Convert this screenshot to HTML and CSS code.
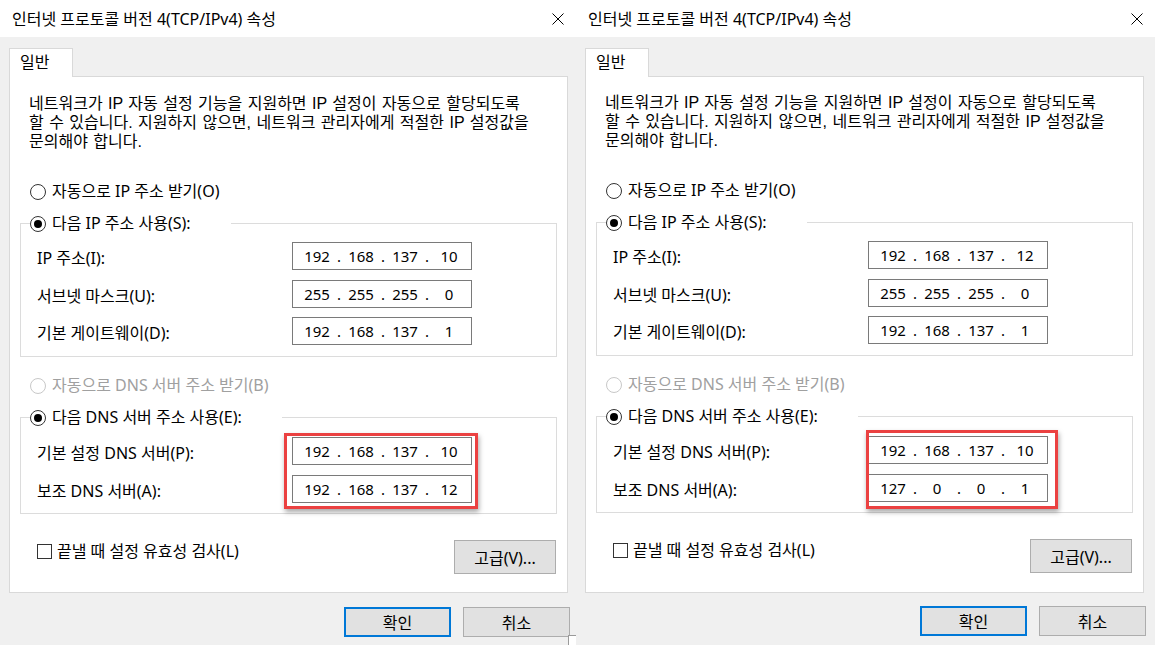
FILE: index.html
```html
<!DOCTYPE html>
<html lang="ko">
<head>
<meta charset="utf-8">
<title>인터넷 프로토콜 버전 4(TCP/IPv4) 속성</title>
<link rel="stylesheet" href="styles.css">
</head>
<body>
<div class="dlg">
  <div class="titlebar">
    <span class="title">인터넷 프로토콜 버전 4(TCP/IPv4) 속성</span>
    <svg class="close" viewBox="0 0 12 12" width="12" height="12"><path d="M0.5 0.5L11.5 11.5M11.5 0.5L0.5 11.5" stroke="#000" stroke-width="1" fill="none"/></svg>
  </div>
  <div class="tabs"><div class="tab">일반</div></div>
  <div class="panel">
    <p class="desc">네트워크가 IP 자동 설정 기능을 지원하면 IP 설정이 자동으로 할당되도록<br>할 수 있습니다. 지원하지 않으면, 네트워크 관리자에게 적절한 IP 설정값을<br>문의해야 합니다.</p>
    <div class="opt first"><span class="radio"></span><span>자동으로 IP 주소 받기(O)</span></div>
    <fieldset class="group g1">
      <legend class="opt"><span class="radio on"></span><span>다음 IP 주소 사용(S):</span></legend>
      <div class="field"><span class="lbl">IP 주소(I):</span><div class="ip"><span class="oct">192</span><span class="dot">.</span><span class="oct">168</span><span class="dot">.</span><span class="oct">137</span><span class="dot">.</span><span class="oct">10</span></div></div>
      <div class="field"><span class="lbl">서브넷 마스크(U):</span><div class="ip"><span class="oct">255</span><span class="dot">.</span><span class="oct">255</span><span class="dot">.</span><span class="oct">255</span><span class="dot">.</span><span class="oct">0</span></div></div>
      <div class="field"><span class="lbl">기본 게이트웨이(D):</span><div class="ip"><span class="oct">192</span><span class="dot">.</span><span class="oct">168</span><span class="dot">.</span><span class="oct">137</span><span class="dot">.</span><span class="oct">1</span></div></div>
    </fieldset>
    <div class="opt dis"><span class="radio"></span><span>자동으로 DNS 서버 주소 받기(B)</span></div>
    <fieldset class="group g2">
      <legend class="opt"><span class="radio on"></span><span>다음 DNS 서버 주소 사용(E):</span></legend>
      <div class="field"><span class="lbl">기본 설정 DNS 서버(P):</span><div class="ip"><span class="oct">192</span><span class="dot">.</span><span class="oct">168</span><span class="dot">.</span><span class="oct">137</span><span class="dot">.</span><span class="oct">10</span></div></div>
      <div class="field"><span class="lbl">보조 DNS 서버(A):</span><div class="ip"><span class="oct">192</span><span class="dot">.</span><span class="oct">168</span><span class="dot">.</span><span class="oct">137</span><span class="dot">.</span><span class="oct">12</span></div></div>
    </fieldset>
    <div class="bottom">
      <div class="chk"><span class="box"></span><span>끝낼 때 설정 유효성 검사(L)</span></div>
      <button class="btn adv">고급(V)...</button>
    </div>
  </div>
  <div class="actions"><button class="btn ok">확인</button><button class="btn">취소</button></div>
  <div class="hl hl-a"></div>
  <div class="grip"></div>
</div>
<div class="dlg dlg-b">
  <div class="titlebar">
    <span class="title">인터넷 프로토콜 버전 4(TCP/IPv4) 속성</span>
    <svg class="close" viewBox="0 0 12 12" width="12" height="12"><path d="M0.5 0.5L11.5 11.5M11.5 0.5L0.5 11.5" stroke="#000" stroke-width="1" fill="none"/></svg>
  </div>
  <div class="tabs"><div class="tab">일반</div></div>
  <div class="panel">
    <p class="desc">네트워크가 IP 자동 설정 기능을 지원하면 IP 설정이 자동으로 할당되도록<br>할 수 있습니다. 지원하지 않으면, 네트워크 관리자에게 적절한 IP 설정값을<br>문의해야 합니다.</p>
    <div class="opt first"><span class="radio"></span><span>자동으로 IP 주소 받기(O)</span></div>
    <fieldset class="group g1">
      <legend class="opt"><span class="radio on"></span><span>다음 IP 주소 사용(S):</span></legend>
      <div class="field"><span class="lbl">IP 주소(I):</span><div class="ip"><span class="oct">192</span><span class="dot">.</span><span class="oct">168</span><span class="dot">.</span><span class="oct">137</span><span class="dot">.</span><span class="oct">12</span></div></div>
      <div class="field"><span class="lbl">서브넷 마스크(U):</span><div class="ip"><span class="oct">255</span><span class="dot">.</span><span class="oct">255</span><span class="dot">.</span><span class="oct">255</span><span class="dot">.</span><span class="oct">0</span></div></div>
      <div class="field"><span class="lbl">기본 게이트웨이(D):</span><div class="ip"><span class="oct">192</span><span class="dot">.</span><span class="oct">168</span><span class="dot">.</span><span class="oct">137</span><span class="dot">.</span><span class="oct">1</span></div></div>
    </fieldset>
    <div class="opt dis"><span class="radio"></span><span>자동으로 DNS 서버 주소 받기(B)</span></div>
    <fieldset class="group g2">
      <legend class="opt"><span class="radio on"></span><span>다음 DNS 서버 주소 사용(E):</span></legend>
      <div class="field"><span class="lbl">기본 설정 DNS 서버(P):</span><div class="ip"><span class="oct">192</span><span class="dot">.</span><span class="oct">168</span><span class="dot">.</span><span class="oct">137</span><span class="dot">.</span><span class="oct">10</span></div></div>
      <div class="field"><span class="lbl">보조 DNS 서버(A):</span><div class="ip"><span class="oct">127</span><span class="dot">.</span><span class="oct">0</span><span class="dot">.</span><span class="oct">0</span><span class="dot">.</span><span class="oct">1</span></div></div>
    </fieldset>
    <div class="bottom">
      <div class="chk"><span class="box"></span><span>끝낼 때 설정 유효성 검사(L)</span></div>
      <button class="btn adv">고급(V)...</button>
    </div>
  </div>
  <div class="actions"><button class="btn ok">확인</button><button class="btn">취소</button></div>
  <div class="hl hl-b"></div>
</div>
</body>
</html>
```

FILE: styles.css
```css
* { box-sizing: border-box; }
html, body { margin: 0; padding: 0; }
body {
  display: flex;
  width: 1155px;
  height: 645px;
  overflow: hidden;
  background: #f0f0f0;
  color: #000;
  font-family: "Noto Sans", "Noto Sans CJK KR", sans-serif;
  font-size: 16px;
}
.dlg {
  position: relative;
  flex: none;
  width: 576px;
  height: 645px;
  background: #f0f0f0;
}
.dlg-b { flex: 1; }
.titlebar {
  height: 37px;
  background: #fff;
  display: flex;
  align-items: center;
  justify-content: space-between;
  padding: 0 12px;
}
.title { line-height: 20px; white-space: nowrap; }
.close { display: block; }
.tabs { display: flex; margin-top: 11px; padding-left: 9px; }
.tab {
  position: relative;
  z-index: 1;
  width: 64px;
  height: 29px;
  margin-bottom: -1px;
  padding: 4px 0 0 10px;
  line-height: 19px;
  background: #fff;
  border: 1px solid #d9d9d9;
  border-bottom: 0;
}
.panel {
  margin-left: 9px;
  width: 559px;
  height: 517px;
  background: #fff;
  border: 1px solid #d9d9d9;
  padding: 17px 10px 0;
}
.dlg-b .panel { padding-top: 16px; }
.desc {
  margin: 0 0 0 9px;
  font-family: "Liberation Sans", "Noto Sans CJK KR", sans-serif;
  line-height: 19px;
  word-spacing: 1px;
  white-space: nowrap;
}
.opt {
  display: flex;
  align-items: center;
  gap: 6px;
  height: 19px;
  line-height: 19px;
  white-space: nowrap;
}
.opt.first { margin: 31px 0 0 10px; }
.opt.dis { margin: 19px 0 0 10px; color: #a0a0a0; }
.radio {
  flex: none;
  width: 16px;
  height: 16px;
  border: 1px solid #333;
  border-radius: 50%;
  background: #fff;
  display: flex;
  align-items: center;
  justify-content: center;
}
.radio.on::after {
  content: "";
  width: 8px;
  height: 8px;
  border-radius: 50%;
  background: #000;
}
.dis .radio { border-color: #c8c8c8; }
.group {
  margin: 13px 0 0;
  padding: 0 10px 11px 9px;
  border: 1px solid #dcdcdc;
  min-width: 0;
}
.group legend { padding: 0 40px 0 0; margin: 0; }
.g2 { padding-bottom: 10px; }
.field {
  display: flex;
  align-items: center;
  height: 28px;
  margin-top: 10px;
}
.g1 .field:nth-of-type(1), .g1 .field:nth-of-type(3) { margin-top: 9px; }
.lbl {
  width: 262px;
  padding-left: 7px;
  padding-top: 2px;
  white-space: nowrap;
}
.ip {
  display: flex;
  width: 180px;
  height: 28px;
  border: 1px solid #7a7a7a;
  padding-left: 6px;
  line-height: 26px;
  font-size: 15px;
  background: #fff;
}
.oct { width: 36px; text-align: center; }
.dot { width: 8px; text-align: center; }
.bottom {
  display: flex;
  justify-content: space-between;
  align-items: flex-start;
  margin-top: 26px;
}
.chk {
  display: flex;
  align-items: center;
  gap: 5px;
  margin: 2px 0 0 17px;
  height: 19px;
  line-height: 19px;
  white-space: nowrap;
}
.box {
  flex: none;
  width: 15px;
  height: 15px;
  border: 1px solid #333;
  background: #fff;
}
.btn {
  font: inherit;
  color: #000;
  background: #e1e1e1;
  border: 1px solid #adadad;
  padding: 0;
  margin: 0;
  width: 107px;
  height: 30px;
}
.adv { width: 102px; height: 34px; margin-right: 1px; }
.ok { border: 2px solid #0078d7; }
.actions {
  display: flex;
  justify-content: flex-end;
  gap: 12px;
  margin-top: 14px;
  padding-right: 6px;
}
.dlg-b .actions { margin-top: 13px; justify-content: flex-start; padding-left: 344px; }
.hl {
  position: absolute;
  border: 3px solid #eb4141;
  box-shadow: 1px 3px 5px rgba(0, 0, 0, 0.35);
}
.hl-a { left: 284px; top: 433px; width: 194px; height: 76px; }
.hl-b { left: 290px; top: 430px; width: 192px; height: 79px; }
.grip {
  position: absolute;
  left: 568px;
  top: 635px;
  width: 9px;
  height: 10px;
  background: #fff;
  border-left: 1px solid #9a9a9a;
  border-top: 1px solid #9a9a9a;
}
```
